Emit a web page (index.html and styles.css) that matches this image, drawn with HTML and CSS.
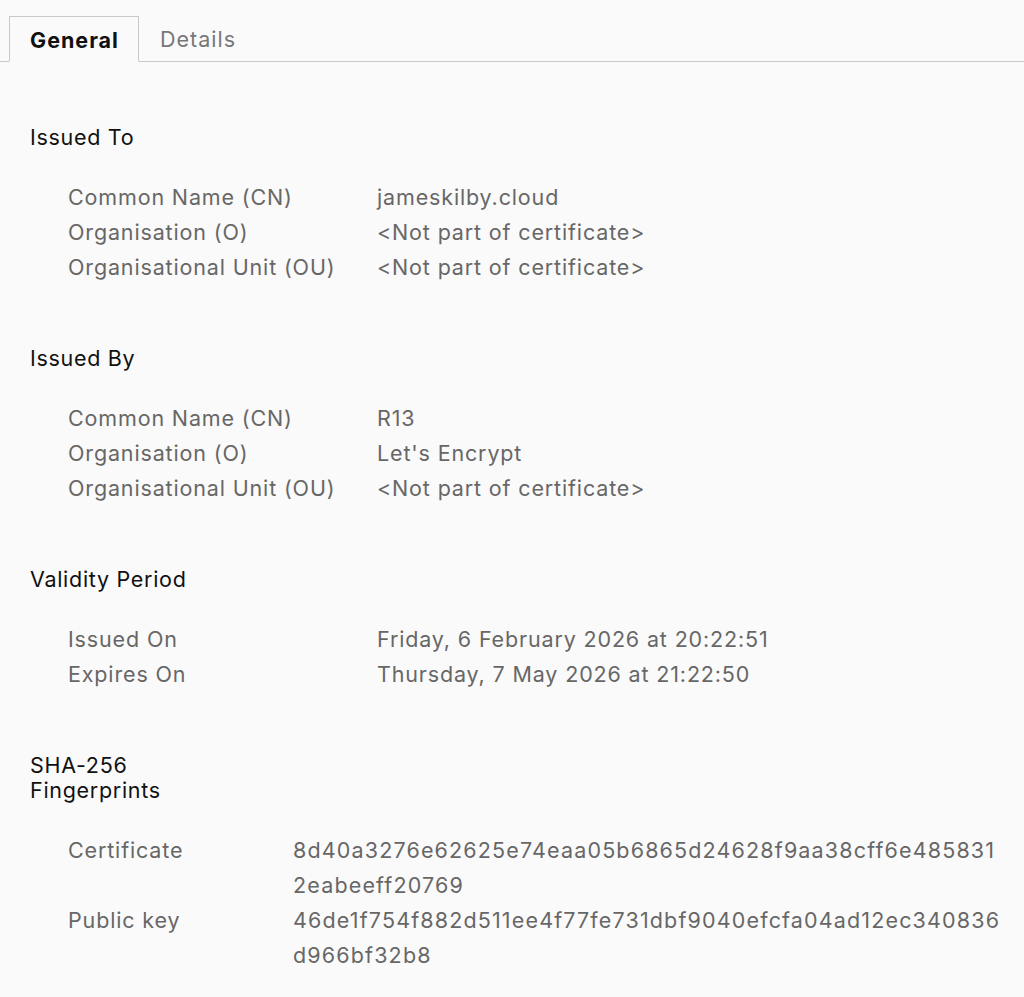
FILE: index.html
```html
<!DOCTYPE html>
<html>
<head>
<meta charset="utf-8">
<link rel="stylesheet" href="styles.css">
</head>
<body>
<div class="tabs">
  <div class="tab active">General</div>
  <div class="tab">Details</div>
  <div class="tab-fill"></div>
</div>
<main class="content">
  <section class="section">
    <h2 class="heading">Issued To</h2>
    <div class="rows">
      <div class="label">Common Name (CN)</div><div class="value">jameskilby.cloud</div>
      <div class="label">Organisation (O)</div><div class="value">&lt;Not part of certificate&gt;</div>
      <div class="label">Organisational Unit (OU)</div><div class="value">&lt;Not part of certificate&gt;</div>
    </div>
  </section>
  <section class="section">
    <h2 class="heading">Issued By</h2>
    <div class="rows">
      <div class="label">Common Name (CN)</div><div class="value">R13</div>
      <div class="label">Organisation (O)</div><div class="value">Let's Encrypt</div>
      <div class="label">Organisational Unit (OU)</div><div class="value">&lt;Not part of certificate&gt;</div>
    </div>
  </section>
  <section class="section">
    <h2 class="heading">Validity Period</h2>
    <div class="rows">
      <div class="label">Issued On</div><div class="value">Friday, 6 February 2026 at 20:22:51</div>
      <div class="label">Expires On</div><div class="value">Thursday, 7 May 2026 at 21:22:50</div>
    </div>
  </section>
  <section class="section">
    <h2 class="heading">SHA-256<br>Fingerprints</h2>
    <div class="rows rows-narrow">
      <div class="label">Certificate</div><div class="value hash"><span class="line">8d40a3276e62625e74eaa05b6865d24628f9aa38cff6e485831</span><span class="line">2eabeeff20769</span></div>
      <div class="label">Public key</div><div class="value hash"><span class="line">46de1f754f882d511ee4f77fe731dbf9040efcfa04ad12ec340836</span><span class="line">d966bf32b8</span></div>
    </div>
  </section>
</main>
</body>
</html>
```
FILE: styles.css
```css
html, body {
  margin: 0;
  padding: 0;
  background: #fafafa;
  font-family: Inter, "Noto Sans", sans-serif;
  -webkit-font-smoothing: antialiased;
}
.tabs {
  display: flex;
  align-items: flex-end;
  padding-top: 16px;
  height: 46px;
}
.tabs::before {
  content: "";
  width: 9px;
  height: 46px;
  box-sizing: border-box;
  border-bottom: 1px solid #c9c9c9;
}
.tab {
  box-sizing: border-box;
  height: 46px;
  padding: 0 21px;
  font-size: 21.5px;
  letter-spacing: 1px;
  line-height: 46px;
  color: #777;
  border-bottom: 1px solid #c9c9c9;
}
.tab.active {
  width: 130px;
  padding: 0 0 0 20px;
  color: #111;
  font-weight: 700;
  border: 1px solid #c9c9c9;
  border-bottom: 1px solid transparent;
  background: #fafafa;
}
.tab-fill {
  flex: 1;
  height: 46px;
  box-sizing: border-box;
  border-bottom: 1px solid #c9c9c9;
}
.content {
  padding: 63px 0 0 30px;
}
.section {
  margin-bottom: 61px;
}
.heading {
  margin: 0 0 30px 0;
  font-size: 21.5px;
  letter-spacing: 0.7px;
  font-weight: 400;
  line-height: 25px;
  color: #111;
}
.rows {
  display: grid;
  grid-template-columns: 309px auto;
  padding-left: 38px;
  font-size: 21.5px;
  letter-spacing: 0.85px;
  line-height: 35px;
  color: #676767;
}
.rows-narrow {
  grid-template-columns: 225px auto;
}
.hash {
  letter-spacing: 1.15px;
}
.label, .value {
  white-space: nowrap;
}
.hash .line {
  display: block;
}
```
